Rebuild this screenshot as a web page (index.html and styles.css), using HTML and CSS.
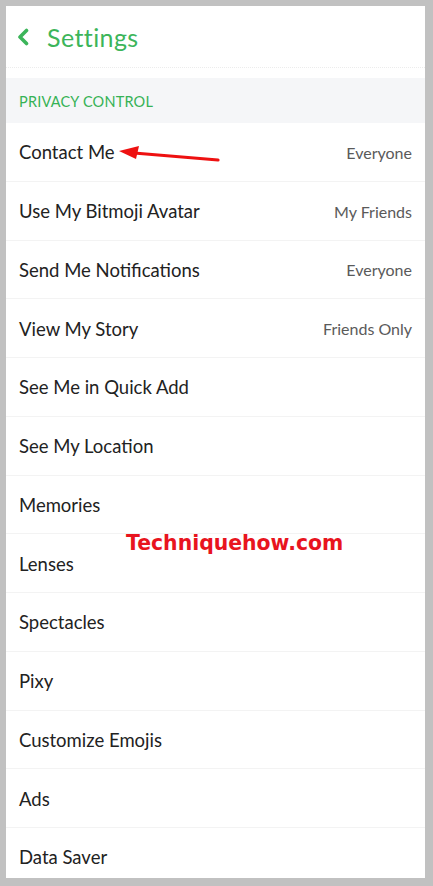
FILE: index.html
```html
<!DOCTYPE html>
<html lang="en">
<head>
    <meta charset="UTF-8">
    <meta name="viewport" content="width=device-width, initial-scale=1.0">
    <title>Settings</title>
    <link rel="stylesheet" href="styles.css">
</head>
<body>
    <div class="frame">
        <div class="screen">
            <header class="topbar">
                <svg class="back" width="14" height="18" viewBox="0 0 14 18">
                    <path d="M10.5 2.5 L4 9 L10.5 15.5" fill="none" stroke="#3cb55a" stroke-width="3.6" stroke-linecap="round" stroke-linejoin="round"/>
                </svg>
                <h1>Settings</h1>
            </header>
            <div class="spacer"></div>
            <div class="section">PRIVACY CONTROL</div>
            <ul class="list">
                <li class="row"><span>Contact Me</span><span class="value">Everyone</span>
                    <svg class="arrow" width="110" height="20" viewBox="0 0 110 20">
                        <path d="M100 15 L16 8" stroke="#ee1111" stroke-width="3.2" stroke-linecap="round"/>
                        <polygon points="1,6 21,1 18,14" fill="#ee1111"/>
                    </svg>
                </li>
                <li class="row"><span>Use My Bitmoji Avatar</span><span class="value">My Friends</span></li>
                <li class="row"><span>Send Me Notifications</span><span class="value">Everyone</span></li>
                <li class="row"><span>View My Story</span><span class="value">Friends Only</span></li>
                <li class="row"><span>See Me in Quick Add</span></li>
                <li class="row"><span>See My Location</span></li>
                <li class="row"><span>Memories</span>
                    <span class="watermark">Techniquehow.com</span>
                </li>
                <li class="row"><span>Lenses</span></li>
                <li class="row"><span>Spectacles</span></li>
                <li class="row"><span>Pixy</span></li>
                <li class="row"><span>Customize Emojis</span></li>
                <li class="row"><span>Ads</span></li>
                <li class="row"><span>Data Saver</span></li>
            </ul>
        </div>
    </div>
</body>
</html>
```

FILE: styles.css
```css
html, body {
    margin: 0;
    padding: 0;
}

body {
    font-family: Lato, "Open Sans", sans-serif;
    background: #c1c1c1;
    width: 433px;
    height: 886px;
    overflow: hidden;
}

.frame {
    padding: 6px 8px 8px 6px;
    height: 886px;
    box-sizing: border-box;
}

.screen {
    background: #fff;
    height: 100%;
    overflow: hidden;
}

.topbar {
    height: 62px;
    display: flex;
    align-items: center;
    padding-left: 10px;
    border-bottom: 1px dotted #ececec;
    box-sizing: border-box;
}
.back {
    margin-right: 17px;
    margin-top: 1px;
}
.topbar h1 {
    margin: 0;
    font-size: 25px;
    font-weight: 400;
    color: #3cb55a;
    letter-spacing: 0.4px;
}

.spacer {
    height: 10px;
}

.section {
    background: #f5f6f8;
    height: 45px;
    line-height: 47px;
    padding-left: 13px;
    font-size: 14.5px;
    color: #36b255;
    letter-spacing: 0.2px;
}

.list {
    list-style: none;
    margin: 0;
    padding: 0;
}
.row {
    position: relative;
    height: 58.75px;
    box-sizing: border-box;
    border-bottom: 1px solid #f3f3f3;
    display: flex;
    align-items: center;
    justify-content: space-between;
    padding: 1px 13px 0 13px;
    font-size: 18.5px;
    color: #222;
}
.value {
    font-size: 16px;
    color: #5a5a5a;
}

.arrow {
    position: absolute;
    left: 112px;
    top: 22px;
}

.watermark {
    position: absolute;
    left: 120px;
    top: 55px;
    font-family: "DejaVu Sans", sans-serif;
    font-weight: bold;
    font-size: 20.4px;
    color: #e8141e;
    z-index: 2;
}
```
